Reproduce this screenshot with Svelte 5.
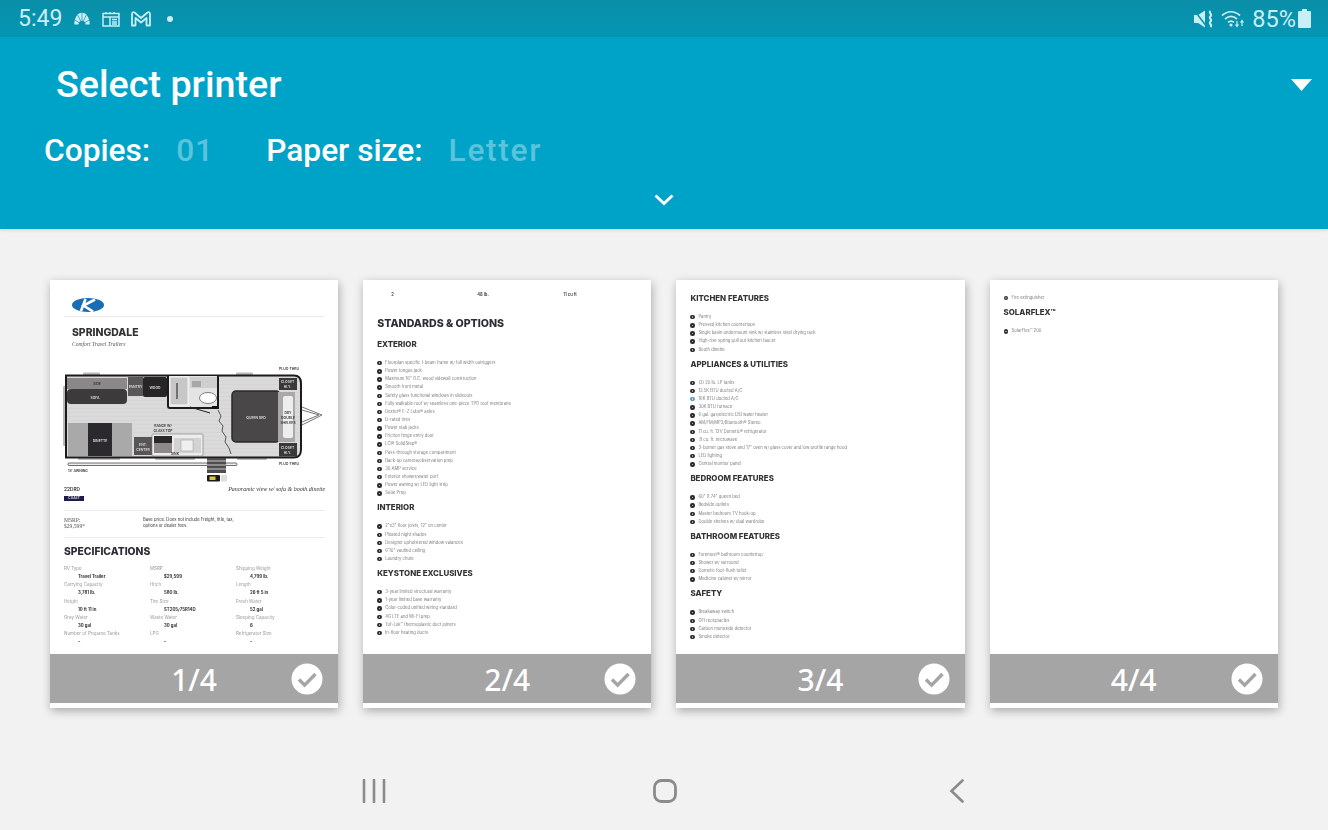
<script>
  const specs = [
    ['RV Type', 'Travel Trailer'], ['MSRP', '$29,599'], ['Shipping Weight', '4,799 lb.'],
    ['Carrying Capacity', '3,781 lb.'], ['Hitch', '580 lb.'], ['Length', '26 ft 5 in'],
    ['Height', '10 ft 11 in'], ['Tire Size', 'ST205/75R14D'], ['Fresh Water', '52 gal'],
    ['Gray Water', '30 gal'], ['Waste Water', '30 gal'], ['Sleeping Capacity', '6'],
    ['Number of Propane Tanks', '–'], ['LPG', '–'], ['Refrigerator Size', '–']
  ];
  const page2 = [
    { title: 'EXTERIOR', items: ['Floorplan specific I-beam frame w/ full width outriggers', 'Power tongue jack', 'Maximum 16" O.C. wood sidewall construction', 'Smooth front metal', 'Safety glass functional windows in slideouts', 'Fully walkable roof w/ seamless one-piece TPO roof membrane', 'Dexter® E-Z Lube® axles', 'D-rated tires', 'Power stab jacks', 'Friction hinge entry door', 'LCI® SolidStep®', 'Pass-through storage compartment', 'Back-up camera/observation prep', '30 AMP service', 'Exterior shower/water port', 'Power awning w/ LED light strip', 'Solar Prep'] },
    { title: 'INTERIOR', items: ['2"x3" floor joists, 12" on center', 'Pleated night shades', 'Designer upholstered window valances', '6\'10" vaulted ceiling', 'Laundry chute'] },
    { title: 'KEYSTONE EXCLUSIVES', items: ['3-year limited structural warranty', '1-year limited base warranty', 'Color-coded unified wiring standard', '4G LTE and Wi-Fi prep', 'Tuf-Lok™ thermoplastic duct joiners', 'In-floor heating ducts'] }
  ];
  const page3 = [
    { title: 'KITCHEN FEATURES', items: ['Pantry', 'Pressed kitchen countertops', 'Single basin undermount sink w/ stainless steel drying rack', 'High-rise spring pull out kitchen faucet', 'Booth dinette'] },
    { title: 'APPLIANCES & UTILITIES', items: ['(2) 20 lb. LP tanks', '13.5K BTU ducted A/C', '16K BTU ducted A/C', '30K BTU furnace', '6 gal. gas/electric DSI water heater', 'AM/FM/MP3/Bluetooth® Stereo', '11 cu. ft. 12V Dometic® refrigerator', '.9 cu. ft. microwave', '3-burner gas stove and 17" oven w/ glass cover and low profile range hood', 'LED lighting', 'Central monitor panel'] },
    { title: 'BEDROOM FEATURES', items: ['60" X 74" queen bed', 'Bedside outlets', 'Master bedroom TV hook-up', 'Double shelves w/ dual wardrobe'] },
    { title: 'BATHROOM FEATURES', items: ['Foremost® bathroom countertop', 'Shower w/ surround', 'Dometic foot-flush toilet', 'Medicine cabinet w/ mirror'] },
    { title: 'SAFETY', items: ['Breakaway switch', 'GFI receptacles', 'Carbon monoxide detector', 'Smoke detector'] }
  ];
</script>

{#snippet check()}
  <svg class="check" viewBox="0 0 32 32" aria-hidden="true">
    <circle cx="16" cy="16" r="15.5" fill="#fff" />
    <path d="M8 16.500l5.600 5.600L24.500 11" fill="none" stroke="#a5a5a5" stroke-width="3.400" />
  </svg>
{/snippet}

{#snippet section(s)}
  <section class="sec">
    <h3>{s.title}</h3>
    <ul>
      {#each s.items as it}
        <li class:blue={it.startsWith('16K')}>{it}</li>
      {/each}
    </ul>
  </section>
{/snippet}

<div class="screen">
  <div class="status">
    <div class="st-left">
      <span class="time">5:49</span>
      <svg class="ic-fan" viewBox="0 0 16 13" aria-hidden="true">
        <path d="M0.300 12.500C0.300 5.500 3.700.8 8 .8s7.700 4.700 7.700 11.700L11.500 12.500C11.500 10 10 8.800 8 8.800S4.500 10 4.500 12.500z" fill="#c9eef4"/>
        <path d="M8 .8v8M3.700 3l3 6.200M12.300 3l-3 6.200M.8 8l4.200 2.500M15.200 8L11 10.500" stroke="#0894ae" stroke-width=".7"/>
      </svg>
      <svg class="ic-cal" viewBox="0 0 18 16" aria-hidden="true">
        <path d="M1 2.500h16v12.500H1zM1 6h16M8 6v9M10 8.500h5M10 11h5M10 13h5M4 1v2M8 1v2M12 1v2" fill="none" stroke="#c9eef4" stroke-width="1.500"/>
      </svg>
      <svg class="ic-m" viewBox="0 0 20 16" aria-hidden="true">
        <path d="M1 14.500V3c0-2 1.500-2.300 2.800-1.300L10 7l6.200-5.300C17.500.7 19 1 19 3v11.500h-3.500V7L10 11.500 4.500 7v7.500z" fill="none" stroke="#c9eef4" stroke-width="1.800" stroke-linejoin="round"/>
      </svg>
      <span class="dot"></span>
    </div>
    <div class="st-right">
      <svg class="ic-mute" viewBox="0 0 20 18" aria-hidden="true">
        <path d="M0 5h4l7-4.500v17L4 13H0z" fill="#c9eef4"/>
        <path d="M0 0l13 17" stroke="#0894ae" stroke-width="1.600"/>
        <path d="M16.500 1c-2.500 2 2.500 3 0 5.300s2.500 3 0 5.300 2.500 3 0 5.400" fill="none" stroke="#c9eef4" stroke-width="2"/>
      </svg>
      <svg class="ic-wifi" viewBox="0 0 24 19" aria-hidden="true">
        <path d="M1 6.500c5.500-5 12.500-5 18 0M4 10c3.800-3.400 8.200-3.400 12 0M7 13.300c2-1.700 4-1.700 6 0" fill="none" stroke="#c9eef4" stroke-width="1.700"/>
        <circle cx="10" cy="16" r="1.600" fill="#c9eef4"/>
        <path d="M16 12v5M14.500 15.500l1.500 2 1.500-2M21 17v-5M19.500 13.500l1.500-2 1.500 2" fill="none" stroke="#c9eef4" stroke-width="1.200"/>
      </svg>
      <span class="pct">85%</span>
      <svg class="ic-batt" viewBox="0 0 13 19" aria-hidden="true">
        <path d="M4 0h5v2h3a1 1 0 0 1 1 1v15a1 1 0 0 1-1 1H1a1 1 0 0 1-1-1V3a1 1 0 0 1 1-1h3z" fill="#c9eef4"/>
      </svg>
    </div>
  </div>

  <header class="head">
    <div class="title-row">
      <span class="title">Select printer</span>
      <svg class="tri" viewBox="0 0 21 12" aria-hidden="true"><path d="M0 0h21L10.500 12z" fill="#fff"/></svg>
    </div>
    <div class="opts">
      <span class="lbl">Copies:</span><span class="val copies">01</span>
      <span class="lbl">Paper size:</span><span class="val letter">Letter</span>
    </div>
    <div class="more">
      <svg viewBox="0 0 20 12" aria-hidden="true"><path d="M1.500 1.500L10 9.500l8.500-8" fill="none" stroke="#fff" stroke-width="3"/></svg>
    </div>
  </header>

  <main class="cards">
    <article class="card">
      <div class="sheet p1">
        <svg class="logo" viewBox="0 0 32 14" aria-hidden="true">
          <ellipse cx="16" cy="7" rx="16" ry="7" fill="#1b6db3"/>
          <path d="M13.500 1L9 13M23 1.500L11.500 7.500l9.500 6" fill="none" stroke="#fff" stroke-width="2.600"/>
        </svg>
        <hr class="r1" />
        <div class="brand">SPRINGDALE</div>
        <div class="tag">Comfort Travel Trailers</div>
        <svg class="plan" viewBox="50 360 288 125" aria-label="Floor plan">
          <defs>
            <pattern id="floor" width="6" height="4" patternUnits="userSpaceOnUse">
              <rect width="6" height="4" fill="#dadada"/>
              <path d="M0 0h6" stroke="#c6c6c6" stroke-width=".5"/>
            </pattern>
          </defs>
          <g fill="#b9b9b9">
            <rect x="83" y="372.500" width="17" height="3" rx="1"/>
            <rect x="236" y="372.500" width="17" height="3" rx="1"/>
            <rect x="63" y="386" width="3" height="60" rx="1"/>
            <rect x="78" y="457" width="42" height="3" rx="1"/>
            <rect x="155" y="457" width="40" height="3" rx="1"/>
            <rect x="237" y="457" width="30" height="3" rx="1"/>
          </g>
          <path d="M66 375.500h228q7 0 7 8v66q0 8-7 8H66z" fill="url(#floor)" stroke="#1c1c1c" stroke-width="2"/>
          <rect x="67" y="378" width="60" height="11" fill="#8d8888"/>
          <rect x="67" y="389" width="60" height="15" rx="4" fill="#3c3a3a"/>
          <rect x="128" y="377" width="15" height="19" fill="#5a5758"/>
          <rect x="143" y="377" width="24" height="20" rx="2" fill="#272526"/>
          <path d="M168 376v30q0 2 2 2h48v-32" fill="#e4e4e4" stroke="#1c1c1c" stroke-width="2"/>
          <rect x="170" y="377" width="18" height="28" fill="#c7c7c7" stroke="#fff" stroke-width=".8"/>
          <path d="M177 383v16" stroke="#444" stroke-width="1.300"/>
          <rect x="190" y="377" width="27" height="11" fill="#cfcfcf"/>
          <rect x="192" y="381" width="9" height="6" fill="#a7a7a7"/>
          <ellipse cx="208" cy="398" rx="8.500" ry="5.500" fill="#fff" stroke="#333" stroke-width=".6"/>
          <rect x="212" y="406" width="6" height="3" fill="#111"/>
          <path d="M190 407l20 6" stroke="#222" stroke-width="1"/>
          <path d="M218 410l3 6-2 5 4 5-1 5 4 6-1 5 4 6 2 6" fill="none" stroke="#333" stroke-width=".8"/>
          <rect x="232" y="391" width="48" height="51" rx="4" fill="#4a4748" stroke="#2a2829" stroke-width="1.500"/>
          <rect x="278" y="392" width="17" height="50" fill="#aaa8a8"/>
          <rect x="283" y="396" width="10" height="42" rx="2" fill="#eee"/>
          <rect x="279" y="378" width="18" height="12" fill="#3a3839"/>
          <rect x="279" y="443" width="18" height="13.500" fill="#3a3839"/>
          <rect x="68" y="423" width="64" height="33" fill="#a9a9a9"/>
          <rect x="88" y="423" width="24" height="33" fill="#2b282e"/>
          <rect x="134" y="437" width="18" height="18" fill="#575555"/>
          <rect x="152" y="434" width="51" height="22" rx="1" fill="#ececec" stroke="#777" stroke-width=".6"/>
          <rect x="154" y="436" width="18" height="7" fill="#2a2829"/>
          <rect x="154" y="443" width="18" height="10" fill="#8f8888"/>
          <rect x="174" y="438" width="27" height="15" fill="#d2d2d2"/>
          <rect x="181" y="440" width="12" height="11" fill="#efefef" stroke="#999" stroke-width=".5"/>
          <path d="M302 407l20 8-20 10M302 410l17 5-17 7" fill="none" stroke="#666" stroke-width=".9"/>
          <rect x="68" y="463" width="169" height="2.500" rx="1" fill="#eee" stroke="#333" stroke-width=".7"/>
          <rect x="207" y="458" width="19" height="15" fill="#4e4c4c"/>
          <path d="M207 461h19M207 465h19M207 469h19" stroke="#ddd" stroke-width=".9"/>
          <rect x="207" y="475" width="13" height="6.500" rx="1" fill="#1a1a1a"/>
          <rect x="209.500" y="476.500" width="6" height="3.500" fill="#d8c542"/>
          <rect x="221" y="475" width="6" height="6.500" fill="#ddd"/>
          <g class="pt">
            <text x="97" y="385" text-anchor="middle">SIDE</text>
            <text class="lt" x="95" y="398.500" text-anchor="middle">SOFA</text>
            <text class="lt" x="135.500" y="387.500" text-anchor="middle">PANTRY</text>
            <text class="lt" x="155" y="389" text-anchor="middle">WOOD</text>
            <text class="lt" x="256" y="419" text-anchor="middle">QUEEN BED</text>
            <text class="lt" x="100" y="441.500" text-anchor="middle">DINETTE</text>
            <text class="lt" x="143" y="446" text-anchor="middle">ENT.</text>
            <text class="lt" x="143" y="451" text-anchor="middle">CENTER</text>
            <text class="lt" x="287.500" y="383" text-anchor="middle">CLOSET</text>
            <text class="lt" x="287.500" y="388" text-anchor="middle">HLY.</text>
            <text class="lt" x="287.500" y="449" text-anchor="middle">CLOSET</text>
            <text class="lt" x="287.500" y="454" text-anchor="middle">HLY.</text>
            <text x="288" y="414" text-anchor="middle">DBY</text>
            <text x="288" y="419" text-anchor="middle">DOUBLE</text>
            <text x="288" y="423.500" text-anchor="middle">SHELVES</text>
            <text x="289" y="370" text-anchor="middle">PLUG-THRU</text>
            <text x="289" y="465" text-anchor="middle">PLUG-THRU</text>
            <text x="163" y="427" text-anchor="middle">RANGE W/</text>
            <text x="163" y="432" text-anchor="middle">GLASS TOP</text>
            <text x="175" y="454.500" text-anchor="middle">SINK</text>
            <text x="68" y="472">18' AWNING</text>
          </g>
        </svg>
        <div class="model-row">
          <span class="model">22DRD</span>
          <span class="pano">Panoramic view w/ sofa &amp; booth dinette</span>
        </div>
        <div class="east">C EAST</div>
        <hr class="r2" />
        <div class="msrp">
          <div class="m-left">MSRP:<br />$29,599*</div>
          <div class="m-right">Base price. Does not include Freight, title, tax,<br />options or dealer fees.</div>
        </div>
        <hr class="r3" />
        <h2 class="spec-h">SPECIFICATIONS</h2>
        <div class="spec">
          {#each specs as [k, v]}
            <div class="pair"><div class="k">{k}</div><div class="v">{v}</div></div>
          {/each}
        </div>
      </div>
      <div class="bar"><span class="num">1/4</span>{@render check()}</div>
    </article>

    <article class="card">
      <div class="sheet p2">
        <div class="carry"><span>2</span><span>48 lb.</span><span>11 cu ft</span></div>
        <h2 class="std">STANDARDS &amp; OPTIONS</h2>
        {#each page2 as s}{@render section(s)}{/each}
      </div>
      <div class="bar"><span class="num">2/4</span>{@render check()}</div>
    </article>

    <article class="card">
      <div class="sheet p3">
        {#each page3 as s}{@render section(s)}{/each}
      </div>
      <div class="bar"><span class="num">3/4</span>{@render check()}</div>
    </article>

    <article class="card">
      <div class="sheet p4">
        <ul class="solo"><li>Fire extinguisher</li></ul>
        {@render section({ title: 'SOLARFLEX™', items: ['SolarFlex™ 200'] })}
      </div>
      <div class="bar"><span class="num">4/4</span>{@render check()}</div>
    </article>
  </main>

  <nav class="nav">
    <svg class="n1" viewBox="0 0 24 24" aria-hidden="true"><path d="M2 1v22M12 1v22M22 1v22" stroke="#8b8b8b" stroke-width="2.600" stroke-linecap="round"/></svg>
    <svg class="n2" viewBox="0 0 24 24" aria-hidden="true"><rect x="1.500" y="1.500" width="21" height="21" rx="7" fill="none" stroke="#8b8b8b" stroke-width="2.800"/></svg>
    <svg class="n3" viewBox="0 0 16 24" aria-hidden="true"><path d="M13.500 1.500L2.500 12l11 10.500" fill="none" stroke="#8b8b8b" stroke-width="2.600" stroke-linecap="round"/></svg>
  </nav>
</div>

<style>
  :global(body) { margin: 0; background: #f2f2f2; }
  .screen { width: 1328px; height: 830px; overflow: hidden; background: #f2f2f2; font-family: Roboto, sans-serif; }

  .status { height: 37px; box-sizing: border-box; padding: 0 17px 0 18px; display: flex; justify-content: space-between; align-items: center; background: linear-gradient(#0a8ea8, #0496b4); color: #c9eef4; }
  .st-left, .st-right { display: flex; align-items: center; }
  .time { font-size: 23px; width: 56px; }
  .ic-fan { width: 16px; height: 13px; }
  .ic-cal { width: 18px; height: 16px; margin-left: 12px; }
  .ic-m { width: 20px; height: 16px; margin-left: 11px; }
  .dot { width: 6px; height: 6px; border-radius: 50%; background: #c9eef4; margin-left: 16px; }
  .ic-mute { width: 20px; height: 18px; }
  .ic-wifi { width: 24px; height: 19px; margin-left: 7px; }
  .pct { font-size: 23.5px; margin-left: 7px; }
  .ic-batt { width: 13px; height: 19px; margin-left: 2px; }

  .head { height: 192px; box-sizing: border-box; background: #00a3c8; padding: 25px 16px 0 44px; box-shadow: 0 1px 3px rgba(0,0,0,.15); position: relative; }
  .title-row { display: flex; justify-content: space-between; align-items: center; height: 44px; padding-left: 12px; }
  .title { font-size: 37.7px; font-weight: 500; color: #fff; line-height: 44px; }
  .tri { width: 21px; height: 12px; margin-top: 2px; }
  .opts { display: flex; align-items: center; height: 40px; margin-top: 24px; font-size: 31.7px; font-weight: 500; }
  .lbl { color: #fff; }
  .val { color: #5cc3dd; margin-left: 26px; letter-spacing: .9px; }
  .copies { width: 90px; }
  .letter { letter-spacing: 1.7px; }
  .more { display: flex; justify-content: center; margin: 22px 0 0 -28px; }
  .more svg { width: 20px; height: 12px; margin-top: 2px; }

  .cards { display: flex; gap: 25px; padding: 51px 0 0 50px; }
  .card { width: 288.2px; height: 428px; background: #fff; box-shadow: 1px 3px 9px rgba(0,0,0,.3); display: flex; flex-direction: column; }
  .sheet { height: 374px; overflow: hidden; box-sizing: border-box; padding-left: 14px; padding-right: 13px; color: #2d2d35; font-family: Inter, "Liberation Sans", sans-serif; filter: blur(.3px); }
  .bar { height: 49px; background: #a5a5a5; display: flex; align-items: center; justify-content: center; position: relative; }
  .num { color: #fff; font-family: "Noto Sans", Roboto, sans-serif; font-size: 30px; font-weight: 500; line-height: 49px; margin-top: 2px; }
  .check { position: absolute; right: 15px; top: 9px; width: 32px; height: 32px; }

  .p1 { padding-top: 18px; }
  .logo { display: block; width: 32px; height: 14px; margin-left: 8px; }
  hr { border: 0; height: 1px; background: #ececec; margin: 0; }
  .r1 { margin-top: 4px; }
  .brand { font-size: 10.4px; font-weight: 800; line-height: 12px; margin: 10px 0 0 8px; color: #333; }
  .tag { font-family: "Liberation Serif", serif; font-style: italic; font-size: 5.6px; line-height: 7px; margin: 1.5px 0 0 8px; color: #555; }
  .plan { display: block; width: 288px; height: 125px; margin: 12.5px 0 0 -14px; }
  .pt text { font-family: Inter, "Liberation Sans", sans-serif; font-size: 3.4px; font-weight: 600; fill: #333; }
  .pt text.lt { fill: #ddd; }
  .model-row { display: flex; justify-content: space-between; align-items: center; height: 8px; }
  .model { font-size: 4.8px; font-weight: 600; }
  .pano { font-family: "Liberation Serif", serif; font-style: italic; font-size: 6px; color: #333; }
  .east { width: 20px; height: 5px; margin-top: 3px; background: #1e1b4e; color: #ddd; font-size: 3.2px; line-height: 5px; text-align: center; font-weight: 700; }
  .r2 { margin-top: 9px; }
  .msrp { display: flex; margin-top: 6px; height: 12px; }
  .m-left { width: 79px; font-family: "Liberation Serif", serif; font-size: 5.6px; line-height: 6px; color: #555; }
  .m-right { font-size: 4.2px; line-height: 5.500px; color: #333; }
  .r3 { margin-top: 8px; }
  .spec-h { font-size: 10.3px; font-weight: 800; line-height: 12px; margin: 7px 0 0; color: #2d2d35; }
  .spec { display: grid; grid-template-columns: 86px 86px 86px; height: 81.5px; overflow: hidden; margin-top: 8px; }
  .pair { height: 16.25px; }
  .k { font-size: 4.5px; line-height: 8.1px; color: #999; }
  .v { font-size: 4.3px; line-height: 8.1px; font-weight: 700; color: #333; padding-left: 14px; }

  .p2 { padding-top: 11px; }
  .carry { display: grid; grid-template-columns: 86px 86px 86px; padding-left: 14px; font-size: 4.2px; line-height: 8px; font-weight: 600; color: #444; }
  .std { font-size: 10.6px; font-weight: 800; line-height: 12px; margin: 19px 0 0; color: #2d2d35; }
  .p2 .sec:first-of-type { margin-top: 9px; }
  .p3 { padding-top: 13px; }
  .p4 { padding-top: 13.500px; }

  .sec { margin-bottom: 5px; }
  h3 { font-size: 7.9px; line-height: 10px; font-weight: 800; margin: 0 0 10px; color: #333; letter-spacing: 0; }
  ul { list-style: none; margin: 0; padding: 0; }
  li { font-size: 4.2px; line-height: 8.15px; height: 8.15px; color: #7e7e7e; padding-left: 8px; position: relative; white-space: nowrap; }
  li::before { content: ""; position: absolute; left: 0; top: 2px; width: 4.4px; height: 4.4px; border-radius: 50%; background: radial-gradient(circle, #b5b5b5 0, #b5b5b5 .4px, #2c2c2c 1px); }
  li.blue::before { background: radial-gradient(circle, #cfe3ee 0, #cfe3ee .4px, #5b9cc0 1px); }
  .solo { margin-bottom: 5.500px; }

  .nav { display: flex; margin-top: 71px; height: 24px; }
  .nav svg { height: 24px; display: block; }
  .n1 { width: 24px; margin-left: 362px; }
  .n2 { width: 24px; margin-left: 267px; }
  .n3 { width: 16px; margin-left: 272px; }
</style>
